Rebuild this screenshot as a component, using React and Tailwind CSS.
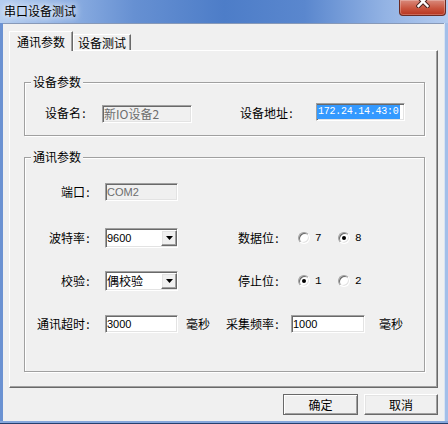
import React from "react";

const sunken =
  "border border-t-[#a0a0a0] border-l-[#a0a0a0] border-r-white border-b-white shadow-[inset_1px_1px_0_#696969,inset_-1px_-1px_0_#e3e3e3]";
const raised =
  "border border-t-white border-l-white border-r-[#696969] border-b-[#696969] shadow-[inset_-1px_-1px_0_#a0a0a0,inset_1px_1px_0_#e3e3e3]";

function Label({ text, className = "" }) {
  return (
    <span className={"whitespace-nowrap shrink-0 " + className}>
      {text}
      <span className="inline-block w-[6px] text-center">:</span>
    </span>
  );
}

function TextBox({ value, w, disabled }) {
  return (
    <div
      className={
        sunken +
        " h-[18px] shrink-0 flex items-center pl-[1px] font-['Liberation_Sans',sans-serif] text-[11px] " +
        (disabled ? "bg-[#f0f0f0] text-[#6d6d6d]" : "bg-white text-black") +
        " " +
        w
      }
    >
      {value}
    </div>
  );
}

function Combo({ value, cjk }) {
  return (
    <div className={sunken + " w-[73px] h-[20px] shrink-0 bg-white flex items-center"}>
      <span
        className={
          "flex-1 pl-[1px] " +
          (cjk ? "text-[12px]" : "font-['Liberation_Sans',sans-serif] text-[11px]")
        }
      >
        {value}
      </span>
      <div className={raised + " w-[16px] h-[16px] bg-[#f0f0f0] flex items-center justify-center"}>
        <svg width="7" height="4" viewBox="0 0 7 4">
          <path d="M0 0 H7 L3.5 4 Z" fill="#000" />
        </svg>
      </div>
    </div>
  );
}

function Radio({ label, checked }) {
  return (
    <div className="flex items-center w-[40px] shrink-0">
      <div className="w-[12px] h-[12px] rounded-full border border-t-[#a0a0a0] border-l-[#a0a0a0] border-r-white border-b-white bg-white shadow-[inset_1px_1px_0_#696969,inset_-1px_-1px_0_#e3e3e3] flex items-center justify-center">
        {checked && <div className="w-[4px] h-[4px] rounded-full bg-black" />}
      </div>
      <span className="ml-[5px] font-['Liberation_Mono',monospace] text-[11px]">{label}</span>
    </div>
  );
}

function Group({ title, className, children }) {
  return (
    <div
      className={
        "relative w-[401px] border border-[#a0a0a0] shadow-[inset_1px_1px_0_#fff,1px_1px_0_#fff] " +
        className
      }
    >
      <span className="absolute left-[6px] top-[-8px] px-[2px] bg-[#f0f0f0] leading-[14px]">{title}</span>
      {children}
    </div>
  );
}

export default function App() {
  return (
    <div className="w-[448px] h-[424px] flex flex-col bg-[#7097d4] font-['Noto_Sans_CJK_SC',sans-serif] text-[12px] leading-[14px] text-black overflow-hidden">
      {/* title bar */}
      <div className="h-[23px] shrink-0 flex items-start justify-between bg-[linear-gradient(to_right,#b4cdef_0%,#96b6e6_12%,#6690d2_30%,#4d7dc8_50%,#5a87ce_68%,#93b3e4_86%,#b3cbef_100%)]">
        <span className="mt-[4px] ml-[4px] [text-shadow:0_0_6px_#fff,0_0_10px_#fff]">串口设备测试</span>
        <div className="mr-[2px] w-[47px] h-[16px] rounded-b-[4px] border border-t-0 border-[#6a2a22] bg-[linear-gradient(to_bottom,#d98a7c,#c9553f_55%,#b7341f)] shadow-[inset_0_0_0_1px_rgba(255,255,255,0.25)] flex justify-center overflow-hidden">
          <svg width="14" height="13" viewBox="0 0 14 13" className="mt-[-5px]">
            <path d="M2.5 2 L11.5 11 M11.5 2 L2.5 11" stroke="#4a2420" strokeWidth="4.4" strokeLinecap="square" />
            <path d="M2.5 2 L11.5 11 M11.5 2 L2.5 11" stroke="#fff" strokeWidth="2.4" strokeLinecap="square" />
          </svg>
        </div>
      </div>

      <div className="flex flex-1">
        <div className="w-[3px] bg-[#6b92d2]" />
        {/* client */}
        <div className="flex-1 bg-[#f0f0f0] border-t border-[#8799b8] flex flex-col">
          {/* tabs */}
          <div className="flex items-end ml-[6px] mt-[7px]">
            <div className="relative z-10 -mb-[1px] w-[64px] h-[20px] bg-[#f0f0f0] border-l border-t border-white border-r border-r-[#696969] shadow-[inset_-1px_0_0_#a0a0a0] flex items-center justify-center pt-[1px]">
              通讯参数
            </div>
            <div className="w-[58px] h-[16px] bg-[#f0f0f0] border-l border-t border-white border-r border-r-[#696969] shadow-[inset_-1px_0_0_#a0a0a0] flex items-center justify-center">
              设备测试
            </div>
          </div>

          {/* panel */}
          <div className="ml-[6px] w-[429px] h-[338px] border border-t-white border-l-white border-r-[#696969] border-b-[#696969] shadow-[inset_-1px_-1px_0_#a0a0a0] pl-[14px] pt-[31px]">
            <Group title="设备参数" className="h-[54px]">
              <div className="flex items-start mt-[20px]">
                <Label text="设备名" className="ml-[20px] mt-[3px] w-[42px]" />
                <div className="ml-[15px] mt-[2px]">
                  <div className={sunken + " w-[90px] h-[18px] bg-[#f0f0f0] text-[#6d6d6d] flex items-center pl-[1px]"}>
                    新IO设备2
                  </div>
                </div>
                <Label text="设备地址" className="ml-[48px] mt-[3px] w-[54px]" />
                <div className={sunken + " ml-[22px] w-[89px] h-[18px] bg-white flex items-center overflow-hidden"}>
                  <span className="bg-[#3399ff] text-white h-[14px] leading-[14px] font-['Liberation_Mono',monospace] text-[10px] tracking-[-0.25px] pl-[1px] pr-[1px] whitespace-nowrap">
                    172.24.14.43:0
                  </span>
                </div>
              </div>
            </Group>

            <Group title="通讯参数" className="h-[215px] mt-[21px]">
              <div className="flex items-center h-[18px] mt-[25px]">
                <div className="w-[66px] text-right shrink-0">
                  <Label text="端口" />
                </div>
                <div className="ml-[14px]">
                  <TextBox value="COM2" w="w-[73px]" disabled />
                </div>
              </div>

              <div className="flex items-center h-[20px] mt-[27px]">
                <div className="w-[66px] text-right shrink-0">
                  <Label text="波特率" />
                </div>
                <div className="ml-[14px]">
                  <Combo value="9600" />
                </div>
                <div className="w-[102px] text-right shrink-0">
                  <Label text="数据位" />
                </div>
                <div className="ml-[18px] flex">
                  <Radio label="7" />
                  <Radio label="8" checked />
                </div>
              </div>

              <div className="flex items-center h-[20px] mt-[23px]">
                <div className="w-[66px] text-right shrink-0">
                  <Label text="校验" />
                </div>
                <div className="ml-[14px]">
                  <Combo value="偶校验" cjk />
                </div>
                <div className="w-[102px] text-right shrink-0">
                  <Label text="停止位" />
                </div>
                <div className="ml-[18px] flex">
                  <Radio label="1" checked />
                  <Radio label="2" />
                </div>
              </div>

              <div className="flex items-center h-[18px] mt-[24px]">
                <div className="w-[66px] text-right shrink-0">
                  <Label text="通讯超时" />
                </div>
                <div className="ml-[14px]">
                  <TextBox value="3000" w="w-[73px]" />
                </div>
                <span className="ml-[8px] w-[24px] shrink-0">毫秒</span>
                <div className="w-[70px] text-right shrink-0">
                  <Label text="采集频率" />
                </div>
                <div className="ml-[11px]">
                  <TextBox value="1000" w="w-[74px]" />
                </div>
                <span className="ml-[14px] shrink-0">毫秒</span>
              </div>
            </Group>
          </div>

          {/* buttons */}
          <div className="flex justify-end gap-[6px] mr-[6px] mt-[6px]">
            <button className="w-[75px] h-[21px] bg-[#f0f0f0] border border-[#696969] shadow-[inset_1px_1px_0_#fff,inset_-1px_-1px_0_#a0a0a0] flex items-center justify-center">
              确定
            </button>
            <button className={raised + " w-[74px] h-[21px] bg-[#f0f0f0] flex items-center justify-center"}>
              取消
            </button>
          </div>
        </div>
        <div className="w-[4px] bg-[#a3bfe9] border-l border-[#d8e4f4]" />
      </div>
      <div className="h-[3px] shrink-0 bg-[#86a7dc] border-b border-[#24406e]" />
    </div>
  );
}
